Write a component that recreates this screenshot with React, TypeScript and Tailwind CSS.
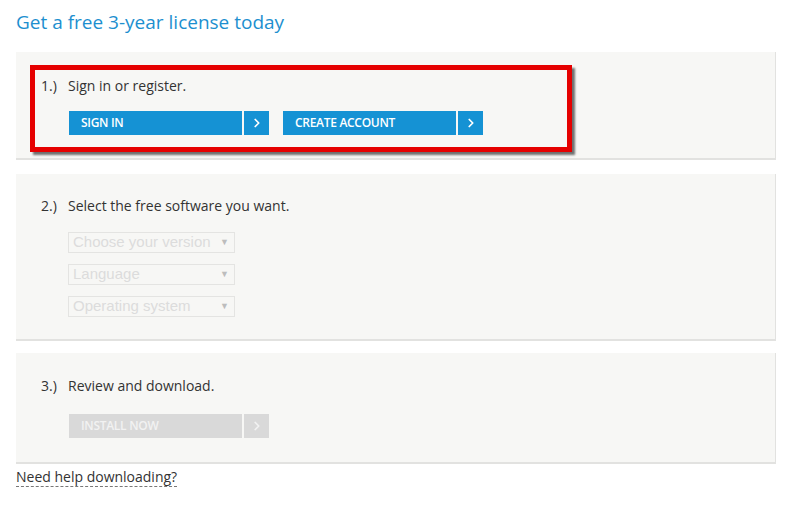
import { ChevronRight } from 'lucide-react';

const font = { fontFamily: '"Open Sans", "Noto Sans", sans-serif' };

function ArrowButton({ label, disabled = false }: { label: string; disabled?: boolean }) {
  const bg = disabled ? 'bg-[#d9d9d9] text-[#f2f2f2]' : 'bg-[#1592d4] text-white';
  return (
    <div className="flex h-6 gap-[2px]">
      <div className={`flex w-[173px] items-center pl-3 text-[12px] font-semibold tracking-tight ${bg}`}>{label}</div>
      <div className={`flex w-[25px] items-center justify-center ${bg}`}>
        <ChevronRight className="h-3.5 w-3.5" strokeWidth={3} />
      </div>
    </div>
  );
}

function FakeSelect({ label }: { label: string }) {
  return (
    <div
      className="flex h-[21px] w-[167px] items-center justify-between border border-[#e4e4e2] pl-1 pr-[5px] text-[15px] text-[#dcdcdc]"
      style={{ fontFamily: '"Liberation Sans", Arial, sans-serif' }}
    >
      <span>{label}</span>
      <span className="text-[9px] text-[#bdbdbd]">▼</span>
    </div>
  );
}

function Step({ num, title }: { num: string; title: string }) {
  return (
    <div className="flex text-[14px] text-[#333]">
      <span className="w-[27px]">{num}</span>
      <span>{title}</span>
    </div>
  );
}

export default function App() {
  return (
    <div className="h-[506px] w-[800px] bg-white" style={font}>
      <div className="px-4 pt-[7px]">
        <h1 className="text-[19px] leading-[30px] text-[#1d8fcf]">Get a free 3-year license today</h1>

        {/* Step 1 */}
        <div className="relative mt-[15px] h-[108px] w-[760px] border-r border-b-2 border-[#e2e2e0] bg-[#f7f7f5] pl-[25px] pt-[23px]">
          <Step num="1.)" title="Sign in or register." />
          <div className="mt-[15px] ml-[28px] flex gap-[14px]">
            <ArrowButton label="SIGN IN" />
            <ArrowButton label="CREATE ACCOUNT" />
          </div>
          {/* annotation */}
          <div className="pointer-events-none absolute left-[14px] top-[13px] h-[87px] w-[542px] border-[5px] border-[#e50000] shadow-[3px_3px_2px_rgba(0,0,0,0.55)]" />
        </div>

        {/* Step 2 */}
        <div className="mt-[14px] h-[167px] w-[760px] border-r border-b-2 border-[#e2e2e0] bg-[#f7f7f5] pl-[25px] pt-[21px]">
          <Step num="2.)" title="Select the free software you want." />
          <div className="mt-[16px] ml-[27px] flex flex-col gap-[11px]">
            <FakeSelect label="Choose your version" />
            <FakeSelect label="Language" />
            <FakeSelect label="Operating system" />
          </div>
        </div>

        {/* Step 3 */}
        <div className="mt-[12px] h-[111px] w-[760px] border-r border-b-2 border-[#e2e2e0] bg-[#f7f7f5] pl-[25px] pt-[22px]">
          <Step num="3.)" title="Review and download." />
          <div className="mt-[18px] ml-[28px]">
            <ArrowButton label="INSTALL NOW" disabled />
          </div>
        </div>

        <div className="mt-[3px] leading-[18px]">
          <span className="border-b border-dashed border-[#777] text-[14px] text-[#333]">
            Need help downloading?
          </span>
        </div>
      </div>
    </div>
  );
}
